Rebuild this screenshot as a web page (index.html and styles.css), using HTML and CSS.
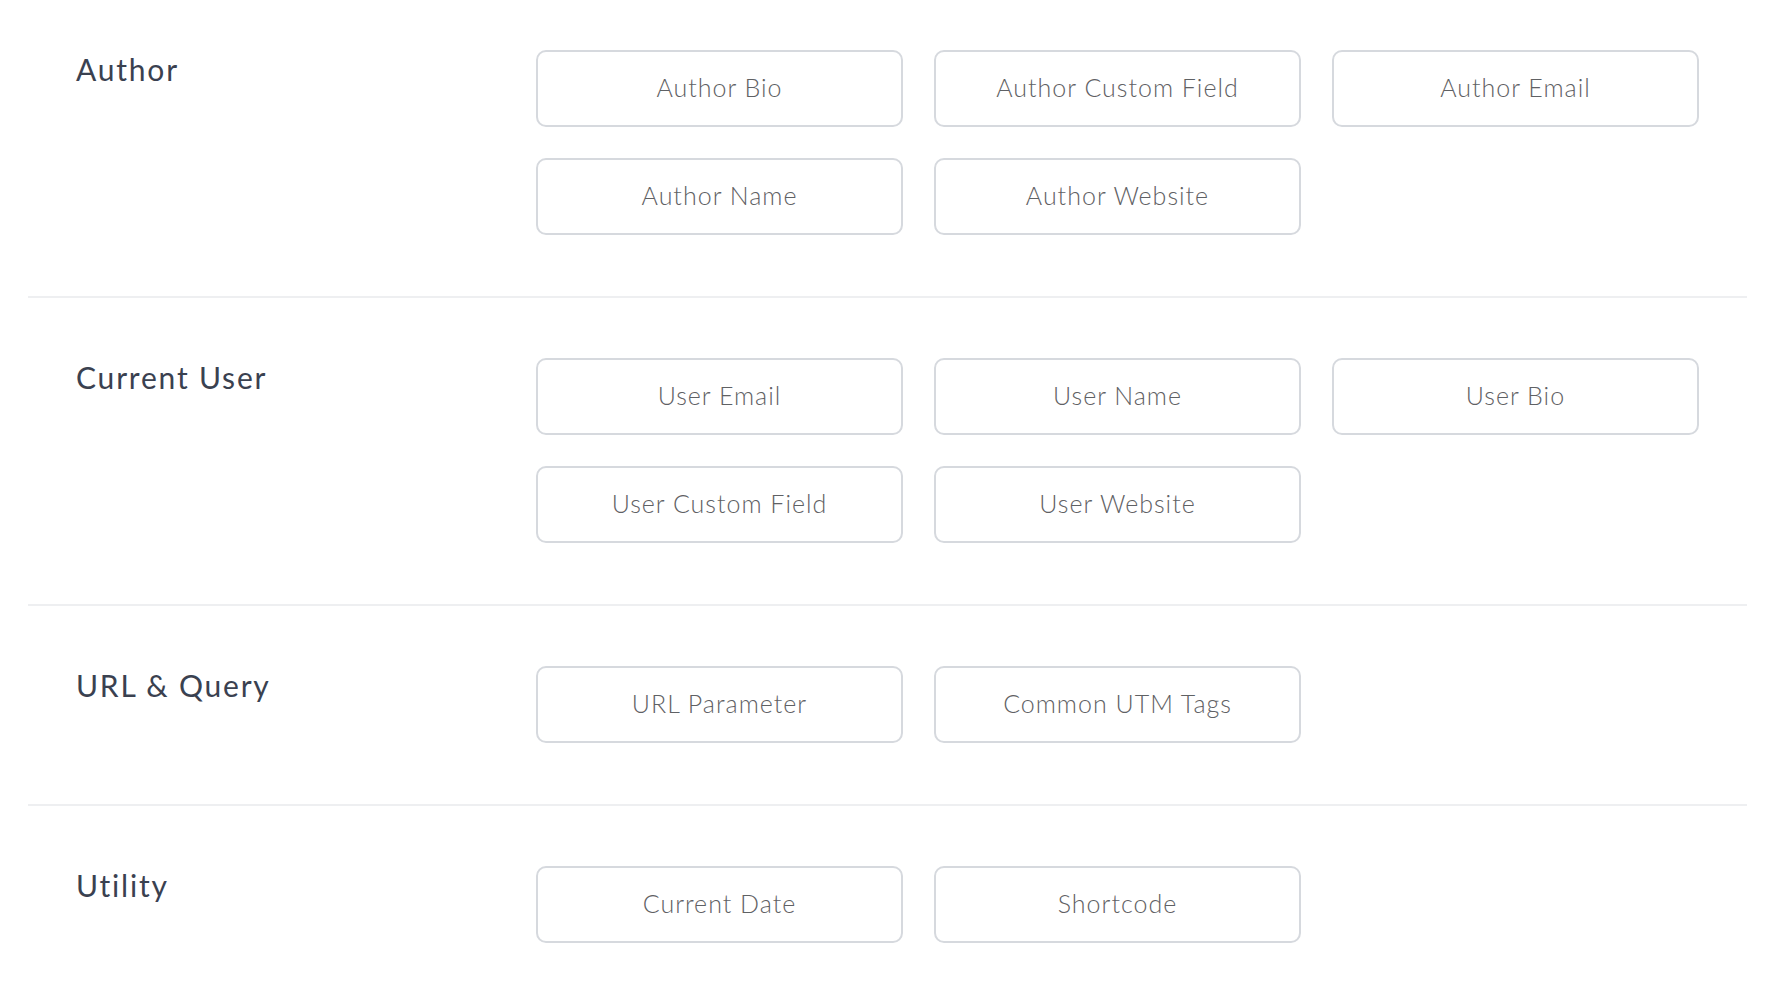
FILE: index.html
```html
<!DOCTYPE html>
<html lang="en">
<head>
<meta charset="utf-8">
<title>Dynamic Tags</title>
<link rel="stylesheet" href="styles.css">
</head>
<body>
<div class="groups">
  <section class="group">
    <h2 class="group-title">Author</h2>
    <div class="tags">
      <button class="tag">Author Bio</button>
      <button class="tag">Author Custom Field</button>
      <button class="tag">Author Email</button>
      <button class="tag">Author Name</button>
      <button class="tag">Author Website</button>
    </div>
  </section>
  <section class="group">
    <h2 class="group-title">Current User</h2>
    <div class="tags">
      <button class="tag">User Email</button>
      <button class="tag">User Name</button>
      <button class="tag">User Bio</button>
      <button class="tag">User Custom Field</button>
      <button class="tag">User Website</button>
    </div>
  </section>
  <section class="group">
    <h2 class="group-title">URL &amp; Query</h2>
    <div class="tags">
      <button class="tag">URL Parameter</button>
      <button class="tag">Common UTM Tags</button>
    </div>
  </section>
  <section class="group">
    <h2 class="group-title">Utility</h2>
    <div class="tags">
      <button class="tag">Current Date</button>
      <button class="tag">Shortcode</button>
    </div>
  </section>
</div>
</body>
</html>
```
FILE: styles.css
```css
html, body {
  margin: 0;
  padding: 0;
  background: #ffffff;
}

body {
  font-family: "Lato", "Noto Sans", sans-serif;
}

.groups {
  margin: 0 31px 0 28px;
}

.group {
  display: grid;
  grid-template-columns: 460px 1fr;
  padding: 60px 48px 61px;
  border-bottom: 2px solid #eeeff1;
}

.group:first-child {
  padding-top: 50px;
}

.group:last-child {
  border-bottom: none;
}

.group-title {
  margin: 0;
  padding-top: 1px;
  font-size: 30px;
  line-height: 36px;
  font-weight: 400;
  letter-spacing: 1.8px;
  color: #3a4150;
}

.tags {
  display: grid;
  grid-template-columns: repeat(3, 1fr);
  gap: 31px;
}

.tag {
  height: 77px;
  margin: 0;
  padding: 0 12px 3px;
  background: #ffffff;
  border: 2px solid #d6d9de;
  border-radius: 10px;
  font-family: "Lato", "Noto Sans", sans-serif;
  font-size: 25px;
  font-weight: 300;
  letter-spacing: 1px;
  color: #5f6164;
  text-align: center;
  cursor: pointer;
}
```
